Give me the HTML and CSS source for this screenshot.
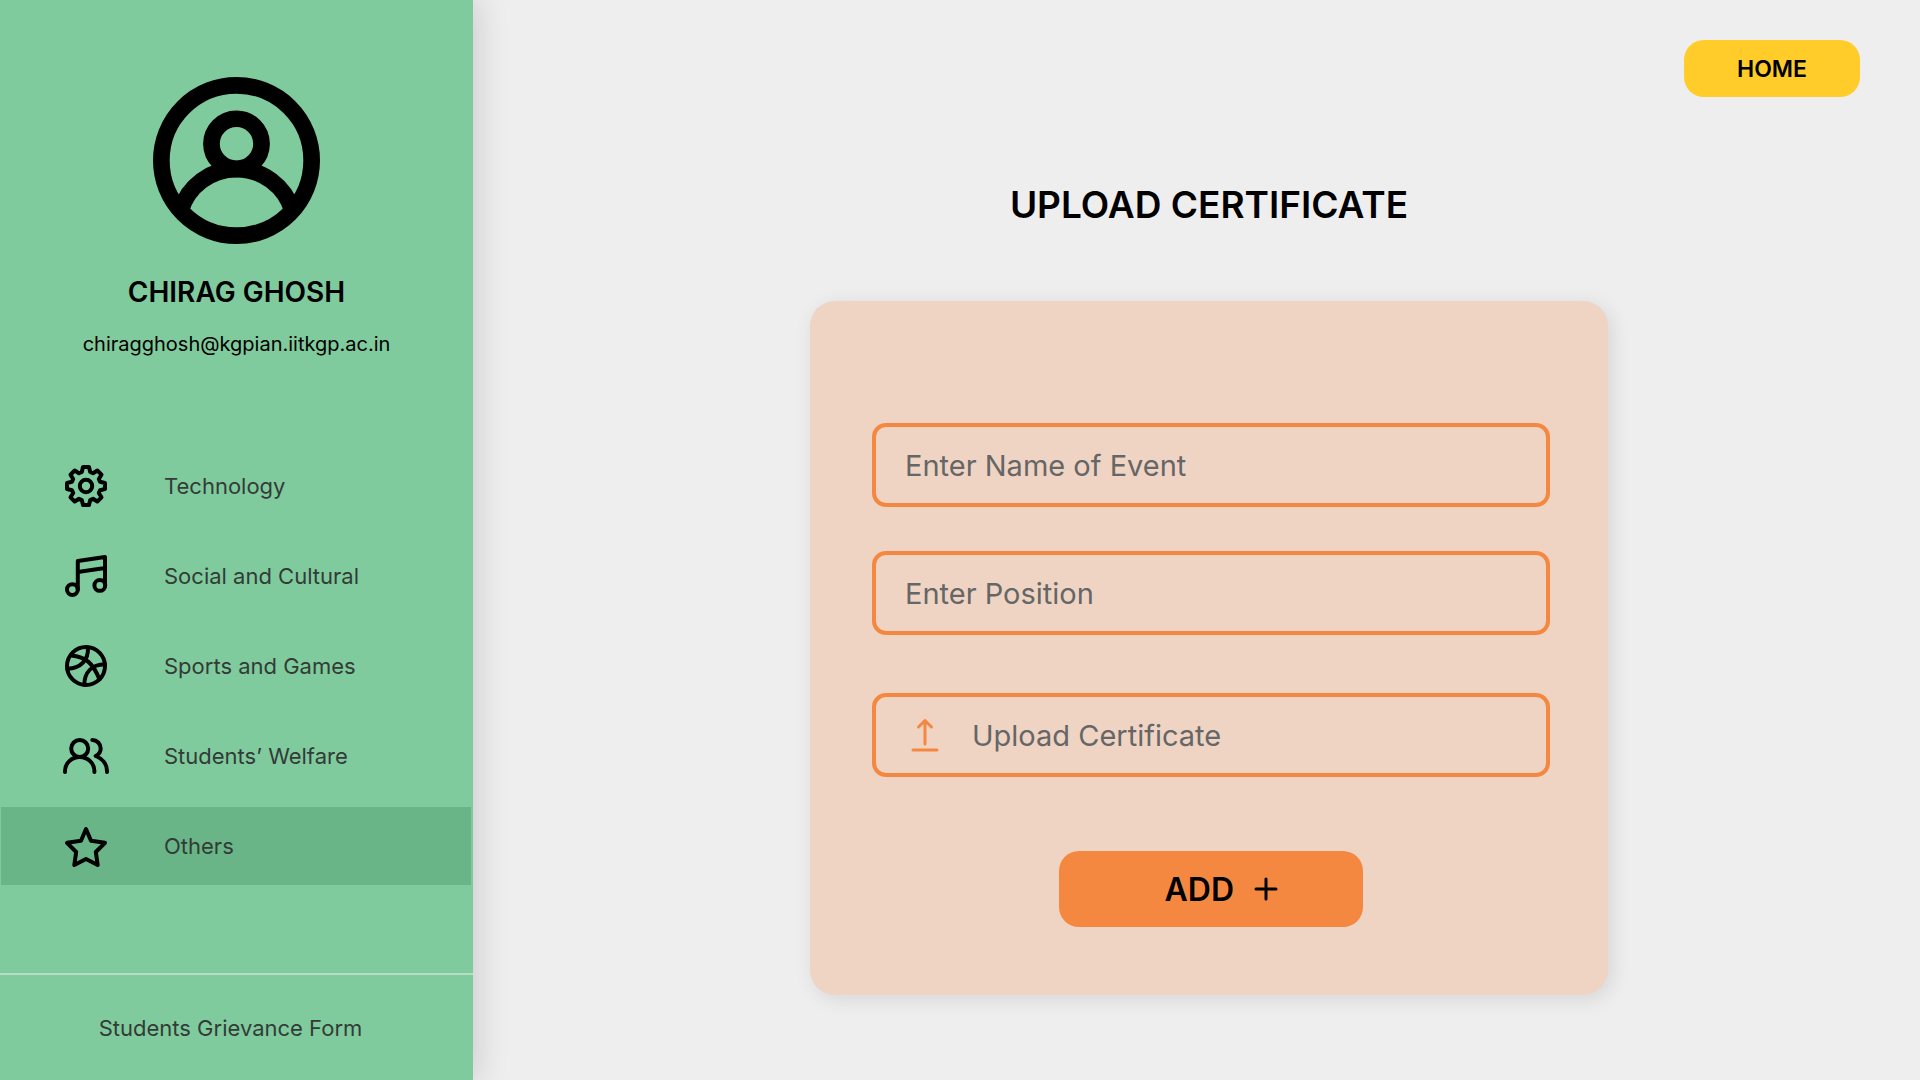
FILE: index.html
```html
<!DOCTYPE html>
<html lang="en">
<head>
  <meta charset="utf-8">
  <meta name="viewport" content="width=device-width, initial-scale=1">
  <title>Upload Certificate</title>
  <link rel="stylesheet" href="styles.css">
</head>
<body>
  <div class="layout">
    <aside class="sidebar">
      <section class="profile">
        <svg class="avatar" viewBox="2 2 20 20" aria-hidden="true">
          <circle cx="12" cy="12" r="9"/>
          <circle cx="12" cy="10" r="3"/>
          <path d="M5.3 18a7 7 0 0 1 13.4 0"/>
        </svg>
        <h2 class="profile-name">CHIRAG GHOSH</h2>
        <p class="profile-email">chiragghosh@kgpian.iitkgp.ac.in</p>
      </section>
      <nav class="menu">
        <a class="menu-item" href="#">
          <svg class="menu-icon" viewBox="0 0 46 46" aria-hidden="true">
            <path d="M20 4h6l1.200 5 2.800 1.200 4.300-2.700 4.200 4.200-2.700 4.300 1.200 2.800 5 1.200v6l-5 1.200-1.200 2.800 2.700 4.300-4.200 4.200-4.300-2.700-2.800 1.200-1.200 5h-6l-1.200-5-2.800-1.200-4.300 2.700-4.200-4.200 2.700-4.300L9 27.200 4 26v-6l5-1.200 1.200-2.800-2.700-4.300 4.200-4.200 4.300 2.700L18.800 9Z"/>
            <circle cx="23" cy="23" r="6.200"/>
          </svg>
          <span>Technology</span>
        </a>
        <a class="menu-item" href="#">
          <svg class="menu-icon" viewBox="0 0 46 46" aria-hidden="true">
            <circle cx="9.400" cy="36.600" r="5.400"/>
            <circle cx="36.800" cy="32.400" r="5.400"/>
            <path d="M14.800 36.600V8L42 4v28.400M14.800 19 42 15"/>
          </svg>
          <span>Social and Cultural</span>
        </a>
        <a class="menu-item" href="#">
          <svg class="menu-icon" viewBox="0 0 46 46" aria-hidden="true">
            <circle cx="23" cy="23" r="19"/>
            <path d="M25 4.500C25.500 17 18 25.500 4.200 25.800M8 12.500C23 14 30 20 36.500 36.500M41.800 21.200C29 21.500 21.500 29 21.300 41.800"/>
          </svg>
          <span>Sports and Games</span>
        </a>
        <a class="menu-item" href="#">
          <svg class="menu-icon" viewBox="0 0 46 46" aria-hidden="true">
            <circle cx="16.700" cy="15.500" r="8.500"/>
            <path d="M2 39v-1a14.700 14 0 0 1 29.400 0v1M29.300 7a8.500 8.500 0 0 1 8.400 8.500c0 3.500-2 6-5 7.500C39 25.500 44 31 44 38v1"/>
          </svg>
          <span>Students’ Welfare</span>
        </a>
        <a class="menu-item active" href="#" aria-current="page">
          <svg class="menu-icon" viewBox="0 0 46 46" aria-hidden="true">
            <path d="M23 6l5 11.700 14 2.100-9.200 9.200 1.900 13L23 36l-11.700 6 1.900-13L4 19.800l14-2.100Z"/>
          </svg>
          <span>Others</span>
        </a>
      </nav>
      <footer class="sidebar-footer">
        <a class="grievance-link" href="#">Students Grievance Form</a>
      </footer>
    </aside>

    <main class="content">
      <header class="topbar">
        <button class="home-button" type="button">HOME</button>
      </header>
      <h1 class="page-title">UPLOAD CERTIFICATE</h1>
      <form class="card">
        <input class="field" type="text" placeholder="Enter Name of Event" aria-label="Event name">
        <input class="field" type="text" placeholder="Enter Position" aria-label="Position">
        <label class="field upload">
          <input class="file-input" type="file">
          <svg class="upload-icon" viewBox="0 0 28 36" aria-hidden="true">
            <path d="M14 27V3.500M7.500 10 14 3.500l6.500 6.500"/>
            <path d="M2 33h24"/>
          </svg>
          <span>Upload Certificate</span>
        </label>
        <button class="add-button" type="submit">
          <span>ADD</span>
          <svg class="plus-icon" viewBox="0 0 24 24" aria-hidden="true">
            <path d="M12 2v20M2 12h20"/>
          </svg>
        </button>
      </form>
    </main>
  </div>
</body>
</html>
```
FILE: styles.css
```css
* {
  box-sizing: border-box;
}

body {
  margin: 0;
  background: #eee;
  color: #000;
  font-family: Inter, "Liberation Sans", sans-serif;
}

svg {
  flex: none;
  fill: none;
  stroke: currentColor;
  stroke-linecap: round;
  stroke-linejoin: round;
}

button,
input {
  font-family: inherit;
}

a {
  color: inherit;
  text-decoration: none;
}

.layout {
  display: flex;
  min-height: 100vh;
}

.sidebar {
  display: flex;
  flex: none;
  flex-direction: column;
  width: 473px;
  background: #80cb9d;
  box-shadow: 4px 0 30px rgba(0, 0, 0, 0.15);
}

.profile {
  display: flex;
  flex-direction: column;
  align-items: center;
  padding-top: 77px;
}

.avatar {
  width: 167px;
  height: 167px;
  stroke-width: 2;
  stroke-linecap: butt;
}

.profile-name {
  margin: 28px 0 0;
  font-size: 28px;
  font-weight: 600;
  line-height: 40px;
}

.profile-email {
  margin: 20px 0 0;
  font-size: 20px;
  line-height: 24px;
}

.menu {
  display: flex;
  flex-direction: column;
  gap: 12px;
  padding: 91px 2px 0 1px;
}

.menu-item {
  display: flex;
  align-items: center;
  gap: 55px;
  height: 78px;
  padding-left: 62px;
  font-size: 22px;
}

.menu-item span,
.grievance-link {
  color: #333b37;
}

.menu-item.active {
  background: #69b588;
}

.menu-icon {
  width: 46px;
  height: 46px;
  stroke-width: 4;
}

.sidebar-footer {
  margin-top: auto;
  padding: 37px 12px 35px 0;
  border-top: 2px solid #b9dcc5;
  font-size: 22px;
  line-height: 33px;
  text-align: center;
}

.content {
  display: flex;
  flex: 1;
  flex-direction: column;
  align-items: center;
  min-width: 0;
  padding: 40px 60px 60px 85px;
}

.topbar {
  display: flex;
  align-self: stretch;
  justify-content: flex-end;
}

.home-button {
  width: 176px;
  height: 57px;
  padding: 0;
  border: 0;
  border-radius: 20px;
  background: #ffcc29;
  color: #000;
  font-size: 23px;
  font-weight: 600;
}

.page-title {
  margin: 84px 0 0;
  font-size: 37px;
  font-weight: 600;
  line-height: 48px;
}

.card {
  display: flex;
  flex-direction: column;
  align-items: center;
  width: 100%;
  max-width: 798px;
  margin-top: 72px;
  padding: 122px 58px 68px 62px;
  border-radius: 25px;
  background: #efd4c4;
  box-shadow: 4px 4px 20px rgba(0, 0, 0, 0.1);
}

.field {
  width: 100%;
  height: 84px;
  margin: 0 0 44px;
  padding: 0 29px;
  border: 4px solid #f58840;
  border-radius: 14px;
  background: transparent;
  color: #666;
  font-size: 29px;
}

.field::placeholder {
  color: #666;
  opacity: 1;
}

.upload {
  display: flex;
  align-items: center;
  gap: 33px;
  margin: 14px 0 74px;
  padding: 0 35px;
}

.file-input {
  position: absolute;
  width: 1px;
  height: 1px;
  opacity: 0;
}

.upload-icon {
  width: 28px;
  height: 36px;
  color: #f58840;
  stroke-width: 3;
}

.add-button {
  display: flex;
  align-items: center;
  justify-content: flex-end;
  gap: 20px;
  width: 304px;
  height: 76px;
  padding: 0 85px 0 0;
  border: 0;
  border-radius: 20px;
  background: #f58840;
  color: #000;
  font-size: 32px;
  font-weight: 600;
}

.plus-icon {
  width: 24px;
  height: 24px;
  stroke-width: 3;
}
```
